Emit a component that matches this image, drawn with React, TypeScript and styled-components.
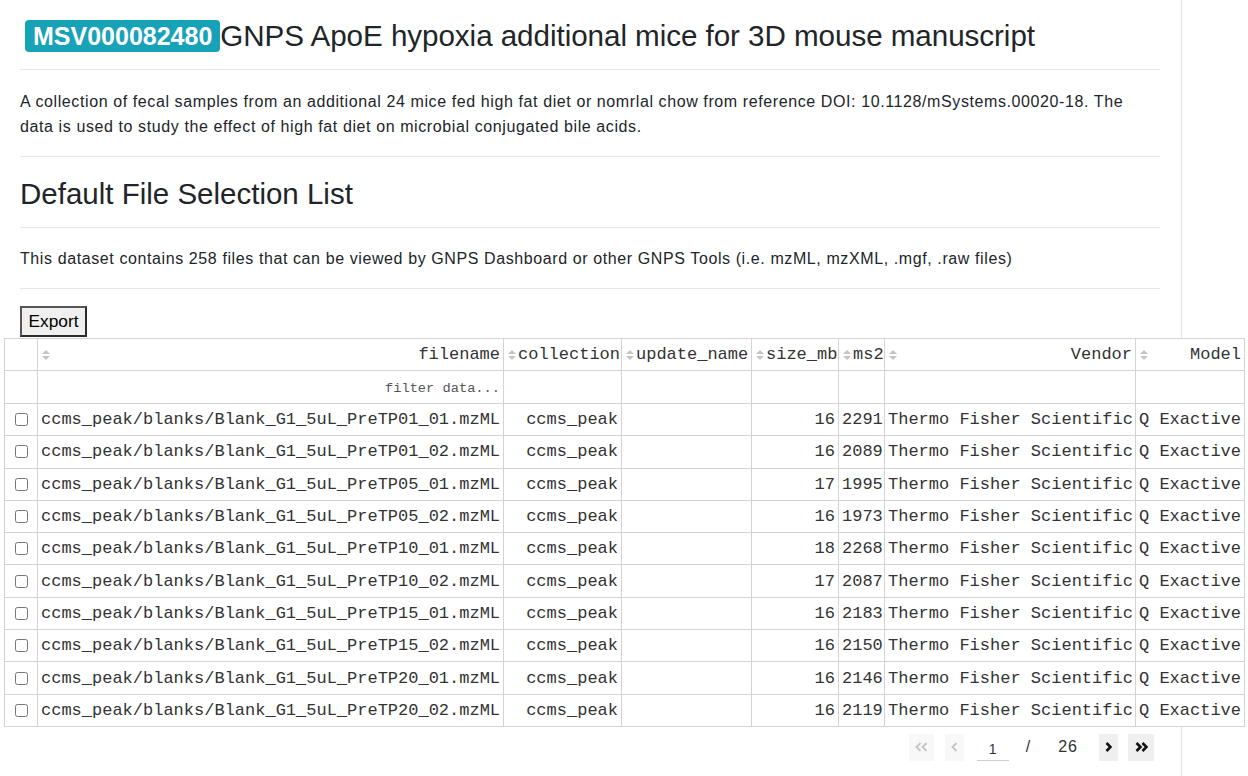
import React from "react";
import styled, { createGlobalStyle } from "styled-components";

const GlobalStyle = createGlobalStyle`
  html, body { margin: 0; padding: 0; background: #fff; }
  body { font-family: "Liberation Sans", Arial, sans-serif; color: #212529; }
  * { box-sizing: border-box; }
`;

const Page = styled.div`
  width: 1182px;
  min-height: 776px;
  border-right: 1px solid #e2e2e2;
  padding: 20px 21px 0 20px;
`;

const TitleRow = styled.h2`
  display: flex;
  align-items: center;
  margin: 0 0 17px 0;
  height: 32px;
  font-size: 29.6px;
  font-weight: 400;
  letter-spacing: -0.05px;
  color: #212529;
`;

const Badge = styled.span`
  display: inline-flex;
  align-items: center;
  height: 32px;
  margin-left: 5px;
  padding: 0 8px;
  background: #17a2b8;
  color: #fff;
  font-weight: 700;
  font-size: 25px;
  border-radius: 4px;
  letter-spacing: 0;
`;

const Rule = styled.hr`
  margin: 0;
  border: 0;
  border-top: 1px solid #e6e6e6;
`;

const Para = styled.p<{ $mt: number; $mb: number }>`
  margin: ${(p) => p.$mt}px 0 ${(p) => p.$mb}px 0;
  font-size: 16px;
  line-height: 25px;
  letter-spacing: 0.6px;
`;

const SubTitle = styled.h3`
  margin: 20px 0 16px 0;
  font-size: 29.5px;
  line-height: 34px;
  font-weight: 400;
`;

const ExportButton = styled.button`
  display: block;
  margin: 17px 0 0 0;
  width: 67px;
  height: 31px;
  padding: 0;
  font-family: "Liberation Sans", Arial, sans-serif;
  font-size: 17.3px;
  color: #000;
  background: #efefef;
  border: 2px solid #2b2b2b;
  border-top-color: #555;
  border-left-color: #555;
`;

const TableWrap = styled.div`
  margin: 1px 0 0 -16px;
  width: 1240px;
  background: #fff;
`;

const Table = styled.table`
  width: 1240px;
  table-layout: fixed;
  border-collapse: collapse;
  font-family: "Liberation Mono", "Courier New", monospace;
  font-size: 17px;
  color: #333;
  background: #fff;
`;

const Cell = styled.td<{ $h: number }>`
  height: ${(p) => p.$h}px;
  padding: 0 3px;
  border: 1px solid #d3d3d3;
  text-align: right;
  white-space: nowrap;
  overflow: hidden;
  background: #fff;
  vertical-align: middle;
  font-weight: 400;
`;

const SelCell = styled(Cell)`
  text-align: center;
  padding: 0;
`;

const HeadInner = styled.div`
  display: flex;
  align-items: center;
  justify-content: space-between;
  gap: 1px;
`;

const FilterText = styled.span`
  font-size: 13.7px;
  color: #555;
`;

const Check = styled.input`
  margin: 0;
  width: 13px;
  height: 13px;
  vertical-align: middle;
`;

const Pager = styled.div`
  display: flex;
  align-items: center;
  justify-content: flex-end;
  margin: 7px 6px 0 0;
  font-family: "Liberation Sans", Arial, sans-serif;
  font-size: 16px;
  color: #333;
`;

const PageButton = styled.div<{ $w: number; $on?: boolean; $ml: number }>`
  display: flex;
  align-items: center;
  justify-content: center;
  width: ${(p) => p.$w}px;
  height: 27px;
  margin-left: ${(p) => p.$ml}px;
  background: ${(p) => (p.$on ? "#efefef" : "#f8f8f8")};
  color: ${(p) => (p.$on ? "#111" : "#c4c4c4")};
`;

const PageInput = styled.div`
  width: 32px;
  height: 27px;
  margin-left: 13px;
  display: flex;
  align-items: center;
  justify-content: center;
  padding-top: 4px;
  font-size: 14px;
  border-bottom: 1px solid #d0d0d0;
`;

const PageText = styled.span<{ $ml: number }>`
  margin-left: ${(p) => p.$ml}px;
  font-size: 16px;
  color: #333;
  letter-spacing: 1px;
`;

const SortIcon = () => (
  <svg width="10" height="12" viewBox="0 0 10 12" style={{ flex: "none" }}>
    <path d="M1 5 L5 1 L9 5 Z" fill="#c4c4c4" />
    <path d="M1 7 L5 11 L9 7 Z" fill="#c4c4c4" />
  </svg>
);

const Chevron = ({ dir, double, on }: { dir: "l" | "r"; double?: boolean; on?: boolean }) => {
  const sw = on ? 2.6 : 1.8;
  const one = (x: number) =>
    dir === "r" ? `M${x} 1 L${x + 4} 5 L${x} 9` : `M${x + 4} 1 L${x} 5 L${x + 4} 9`;
  return (
    <svg width={double ? 13 : 7} height="10" viewBox={double ? "0 0 13 10" : "0 0 7 10"}>
      <path d={one(1.5)} fill="none" stroke="currentColor" strokeWidth={sw} />
      {double && <path d={one(7.5)} fill="none" stroke="currentColor" strokeWidth={sw} />}
    </svg>
  );
};

const columns = [
  { key: "filename", w: 466 },
  { key: "collection", w: 118 },
  { key: "update_name", w: 130 },
  { key: "size_mb", w: 87 },
  { key: "ms2", w: 46 },
  { key: "Vendor", w: 251 },
  { key: "Model", w: 109 },
];

const rows: [string, number, number][] = [
  ["PreTP01_01", 16, 2291],
  ["PreTP01_02", 16, 2089],
  ["PreTP05_01", 17, 1995],
  ["PreTP05_02", 16, 1973],
  ["PreTP10_01", 18, 2268],
  ["PreTP10_02", 17, 2087],
  ["PreTP15_01", 16, 2183],
  ["PreTP15_02", 16, 2150],
  ["PreTP20_01", 16, 2146],
  ["PreTP20_02", 16, 2119],
];

export default function App() {
  return (
    <>
      <GlobalStyle />
      <Page>
        <TitleRow>
          <Badge>MSV000082480</Badge>
          GNPS ApoE hypoxia additional mice for 3D mouse manuscript
        </TitleRow>
        <Rule />
        <Para $mt={19} $mb={17}>
          A collection of fecal samples from an additional 24 mice fed high fat diet or nomrlal chow from
          reference DOI: 10.1128/mSystems.00020-18. The data is used to study the effect of high fat diet on
          microbial conjugated bile acids.
        </Para>
        <Rule />
        <SubTitle>Default File Selection List</SubTitle>
        <Rule />
        <Para $mt={18} $mb={17}>
          This dataset contains 258 files that can be viewed by GNPS Dashboard or other GNPS Tools (i.e. mzML,
          mzXML, .mgf, .raw files)
        </Para>
        <Rule />
        <ExportButton>Export</ExportButton>
        <TableWrap>
          <Table>
            <colgroup>
              <col style={{ width: 33 }} />
              {columns.map((c) => (
                <col key={c.key} style={{ width: c.w }} />
              ))}
            </colgroup>
            <thead>
              <tr>
                <SelCell as="th" $h={32} />
                {columns.map((c) => (
                  <Cell as="th" key={c.key} $h={32}>
                    <HeadInner>
                      <SortIcon />
                      <span>{c.key}</span>
                    </HeadInner>
                  </Cell>
                ))}
              </tr>
              <tr>
                <SelCell as="th" $h={33} />
                {columns.map((c) => (
                  <Cell as="th" key={c.key} $h={33}>
                    {c.key === "filename" && <FilterText>filter data...</FilterText>}
                  </Cell>
                ))}
              </tr>
            </thead>
            <tbody>
              {rows.map(([f, size, ms2]) => (
                <tr key={f}>
                  <SelCell $h={32.3}>
                    <Check type="checkbox" />
                  </SelCell>
                  <Cell $h={32.3}>{`ccms_peak/blanks/Blank_G1_5uL_${f}.mzML`}</Cell>
                  <Cell $h={32.3}>ccms_peak</Cell>
                  <Cell $h={32.3} />
                  <Cell $h={32.3}>{size}</Cell>
                  <Cell $h={32.3}>{ms2}</Cell>
                  <Cell $h={32.3}>Thermo Fisher Scientific</Cell>
                  <Cell $h={32.3}>Q Exactive</Cell>
                </tr>
              ))}
            </tbody>
          </Table>
        </TableWrap>
        <Pager>
          <PageButton $w={25} $ml={0}>
            <Chevron dir="l" double />
          </PageButton>
          <PageButton $w={19} $ml={11}>
            <Chevron dir="l" />
          </PageButton>
          <PageInput>1</PageInput>
          <PageText $ml={17}>/</PageText>
          <PageText $ml={27}>26</PageText>
          <PageButton $w={19} $ml={21} $on>
            <Chevron dir="r" on />
          </PageButton>
          <PageButton $w={26} $ml={10} $on>
            <Chevron dir="r" double on />
          </PageButton>
        </Pager>
      </Page>
    </>
  );
}
